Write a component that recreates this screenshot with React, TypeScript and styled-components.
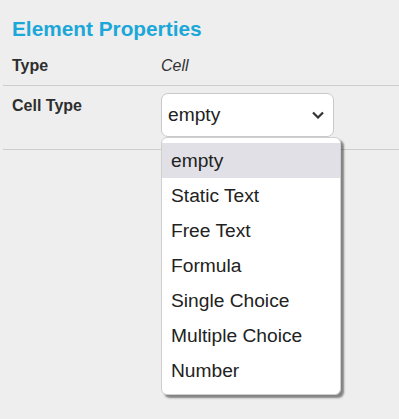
import React from "react";
import styled, { createGlobalStyle } from "styled-components";

const Global = createGlobalStyle`
  html, body { margin: 0; padding: 0; background: #eeeeee; }
  body { font-family: "Liberation Sans", Arial, sans-serif; color: #2b2b2b; }
`;

const Panel = styled.div`
  padding: 16px 0 0 3px;
  width: 396px;
  height: 403px;
`;

const Title = styled.h2`
  margin: 0 0 0 9px;
  font-size: 20.8px;
  line-height: 25px;
  font-weight: bold;
  color: #1ca7d9;
`;

const Row = styled.div<{ $top: number; $bottom: number }>`
  display: grid;
  grid-template-columns: 149px 1fr;
  padding: ${(p) => p.$top}px 0 ${(p) => p.$bottom}px 9px;
  border-bottom: 1px solid #cdcdcd;
`;

const Label = styled.div<{ $pt?: number }>`
  font-weight: bold;
  font-size: 16px;
  line-height: 18px;
  padding-top: ${(p) => p.$pt ?? 0}px;
  color: #2e2e2e;
`;

const Value = styled.div`
  font-style: italic;
  font-size: 16px;
  line-height: 18px;
  color: #333;
`;

const SelectWrap = styled.div`
  position: relative;
  width: 173px;
`;

const SelectBox = styled.div`
  box-sizing: border-box;
  height: 44px;
  background: #fff;
  border: 1px solid #c9c9c9;
  border-radius: 7px;
  display: flex;
  align-items: center;
  justify-content: space-between;
  padding: 0 9px 0 6px;
  font-size: 19.2px;
  color: #222;
`;

const Popup = styled.ul`
  position: absolute;
  left: 0;
  top: 44px;
  width: 180px;
  box-sizing: border-box;
  margin: 0;
  padding: 5px 0 6px;
  list-style: none;
  background: #fff;
  border: 1px solid #cfcfcf;
  border-radius: 6px;
  box-shadow: 3px 3px 2px rgba(0, 0, 0, 0.45);
`;

const Item = styled.li<{ $active?: boolean }>`
  height: 35px;
  line-height: 35px;
  padding-left: 9px;
  font-size: 19.2px;
  color: #222;
  background: ${(p) => (p.$active ? "#e0e0e6" : "transparent")};
`;

const options = [
  "empty",
  "Static Text",
  "Free Text",
  "Formula",
  "Single Choice",
  "Multiple Choice",
  "Number",
];

export default function App() {
  return (
    <>
      <Global />
      <Panel>
        <Title>Element Properties</Title>
        <Row $top={16} $bottom={10}>
          <Label>Type</Label>
          <Value>Cell</Value>
        </Row>
        <Row $top={7} $bottom={12}>
          <Label $pt={4}>Cell Type</Label>
          <SelectWrap>
            <SelectBox>
              <span>empty</span>
              <svg width="12" height="8" viewBox="0 0 12 8">
                <path d="M1 1.5 L6 6.5 L11 1.5" fill="none" stroke="#333" strokeWidth="2.2" />
              </svg>
            </SelectBox>
            <Popup>
              {options.map((o, i) => (
                <Item key={o} $active={i === 0}>
                  {o}
                </Item>
              ))}
            </Popup>
          </SelectWrap>
        </Row>
      </Panel>
    </>
  );
}
